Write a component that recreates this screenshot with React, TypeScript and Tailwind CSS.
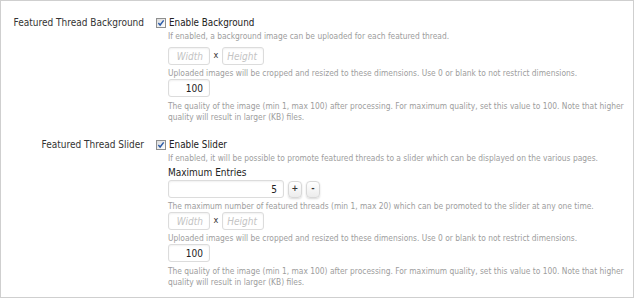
const font = { fontFamily: '"DejaVu Sans Condensed", "DejaVu Sans", Verdana, sans-serif' };

function Check() {
  return (
    <span className="flex h-[10px] w-[10px] shrink-0 items-center justify-center border border-[#8e8f8f] bg-gradient-to-br from-[#dcdcdc] to-white">
      <svg width="8" height="8" viewBox="0 0 9 9">
        <path d="M1.5 4.5 L3.5 6.8 L7.5 1.5" fill="none" stroke="#2b5ba8" strokeWidth="1.6" />
      </svg>
    </span>
  );
}

function Box({ value, placeholder, w = "w-[42px]" }: { value?: string; placeholder?: string; w?: string }) {
  return (
    <div
      className={`${w} flex h-[18px] items-center justify-end rounded-[3px] border border-[#dcdcdc] bg-white pr-[6px] text-[10px] shadow-[inset_0_1px_2px_rgba(0,0,0,0.06)]`}
    >
      {value ? <span className="text-[#222]">{value}</span> : <span className="italic text-[#c4c4c4]">{placeholder}</span>}
    </div>
  );
}

function Btn({ c }: { c: string }) {
  return (
    <div className="flex h-[17px] w-[14px] items-center justify-center rounded-[4px] border border-[#d8d8d8] bg-gradient-to-b from-white to-[#ececec] text-[9px] font-bold text-[#333] shadow-[0_1px_2px_rgba(0,0,0,0.15)]">
      {c}
    </div>
  );
}

function Desc({ children }: { children: React.ReactNode }) {
  return <p className="whitespace-nowrap text-[8.35px] leading-[11px] text-[#9d9d9d]">{children}</p>;
}

function Dims() {
  return (
    <div className="flex items-center">
      <Box placeholder="Width" />
      <span className="w-[12px] text-center text-[9px] text-[#333]">x</span>
      <Box placeholder="Height" />
    </div>
  );
}

function Quality() {
  return (
    <>
      <Box value="100" />
      <div className="mt-[4px]">
        <Desc>
          The quality of the image (min 1, max 100) after processing. For maximum quality, set this value to 100. Note that higher
          <br />
          quality will result in larger (KB) files.
        </Desc>
      </div>
    </>
  );
}

function Row({ label, children }: { label: string; children: React.ReactNode }) {
  return (
    <div className="flex">
      <div className="w-[144px] shrink-0 pr-[1px] text-right text-[10px] leading-[14px] text-[#333]">{label}</div>
      <div className="ml-[11px] flex flex-col">{children}</div>
    </div>
  );
}

export default function App() {
  return (
    <div className="h-[300px] w-[639px] bg-white" style={font}>
      <div className="flex h-[298px] w-[634px] flex-col border border-[#cfcfcf] pt-[15px]">
        <Row label="Featured Thread Background">
          <div className="flex h-[14px] items-center gap-[3px]">
            <Check />
            <span className="text-[9.8px] text-[#222]">Enable Background</span>
          </div>
          <div className="ml-[12px] flex flex-col">
            <div className="mt-[1px]">
              <Desc>If enabled, a background image can be uploaded for each featured thread.</Desc>
            </div>
            <div className="mt-[5px]">
              <Dims />
            </div>
            <div className="mt-[3px]">
              <Desc>Uploaded images will be cropped and resized to these dimensions. Use 0 or blank to not restrict dimensions.</Desc>
            </div>
            <Quality />
          </div>
        </Row>
        <div className="mt-[15px]">
          <Row label="Featured Thread Slider">
            <div className="flex h-[14px] items-center gap-[3px]">
              <Check />
              <span className="text-[9.8px] text-[#222]">Enable Slider</span>
            </div>
            <div className="ml-[12px] flex flex-col">
              <div className="mt-[1px]">
                <Desc>If enabled, it will be possible to promote featured threads to a slider which can be displayed on the various pages.</Desc>
              </div>
              <div className="mt-[3px] text-[10px] leading-[11px] text-[#222]">Maximum Entries</div>
              <div className="mt-[2px] flex items-center gap-[4px]">
                <Box value="5" w="w-[116px]" />
                <Btn c="+" />
                <Btn c="-" />
              </div>
              <div className="mt-[3px]">
                <Desc>The maximum number of featured threads (min 1, max 20) which can be promoted to the slider at any one time.</Desc>
              </div>
              <Dims />
              <div className="mt-[3px]">
                <Desc>Uploaded images will be cropped and resized to these dimensions. Use 0 or blank to not restrict dimensions.</Desc>
              </div>
              <Quality />
            </div>
          </Row>
        </div>
      </div>
    </div>
  );
}
